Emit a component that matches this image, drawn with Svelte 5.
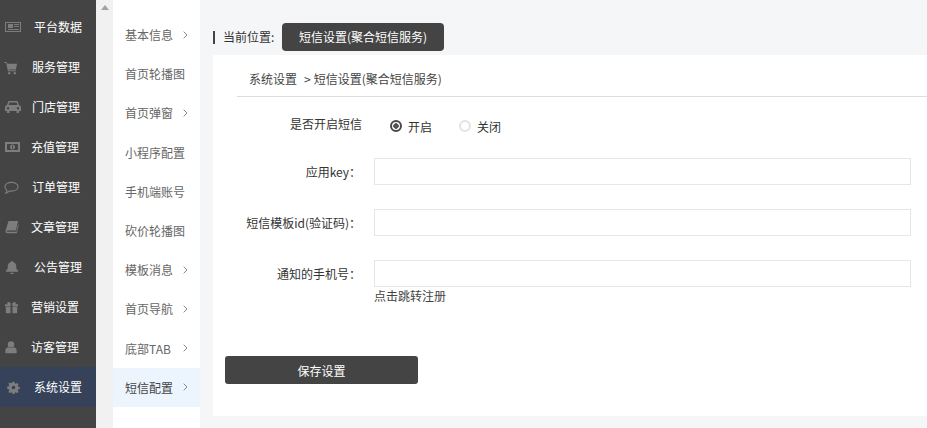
<script>
  const nav = [
    { name: "平台数据", left: 34, icon: "news", x: 5, size: 16 },
    { name: "服务管理", left: 32, icon: "cart", x: 4, size: 15 },
    { name: "门店管理", left: 32, icon: "car", x: 5, size: 16 },
    { name: "充值管理", left: 31, icon: "money", x: 5, size: 16 },
    { name: "订单管理", left: 32, icon: "comment", x: 4, size: 15 },
    { name: "文章管理", left: 31, icon: "book", x: 5, size: 14 },
    { name: "公告管理", left: 34, icon: "bell", x: 5, size: 14 },
    { name: "营销设置", left: 31, icon: "gift", x: 5, size: 13 },
    { name: "访客管理", left: 31, icon: "user", x: 4, size: 14 },
    { name: "系统设置", left: 34, icon: "cog", x: 7, size: 13, active: true },
  ];

  const sub = [
    { name: "基本信息", more: true },
    { name: "首页轮播图" },
    { name: "首页弹窗", more: true },
    { name: "小程序配置" },
    { name: "手机端账号" },
    { name: "砍价轮播图" },
    { name: "模板消息", more: true },
    { name: "首页导航", more: true },
    { name: "底部TAB", more: true },
    { name: "短信配置", more: true, active: true },
  ];
</script>

<div class="page">
  <aside class="nav">
    {#each nav as item}
      <div class="nav-item" class:active={item.active}>
        <svg class="nav-icon" viewBox="0 0 16 16" width={item.size} height={item.size} style="left: {item.x}px; top: {20 - item.size / 2}px" aria-hidden="true">
          {#if item.icon === "news"}
            <path fill-rule="evenodd" d="M0 3h16v10H0zM1 4v8h14V4zM3 5h5v4H3zM9 5h5v1H9zM9 7h5v1H9zM3 10h11v1H3z" />
          {:else if item.icon === "cart"}
            <path d="M0 2h3l.5 2H14l-1.400 6H5l.3 1H13v1H4.200L2.300 3H0z" />
            <circle cx="5.500" cy="14" r="1.300" />
            <circle cx="11.500" cy="14" r="1.300" />
          {:else if item.icon === "car"}
            <path fill-rule="evenodd" d="M3.500 2h9l1.600 4.200c1 .4 1.900 1 1.900 2V12h-2v2h-2.500v-2h-7v2H2v-2H0V8.200c0-1 .9-1.600 1.900-2zM4.500 3.500 3.500 6h9l-1-2.500zM3 8a1.200 1.200 0 1 0 0 2.400A1.200 1.200 0 0 0 3 8zm10 0a1.200 1.200 0 1 0 0 2.400A1.200 1.200 0 0 0 13 8z" />
          {:else if item.icon === "money"}
            <path fill-rule="evenodd" d="M0 3h15v10H0zM2.500 5 2 5.500v5l.5.5h10l.5-.5v-5l-.5-.5zM7.500 5.500c1.400 0 2.500 1.100 2.500 2.500s-1.100 2.500-2.500 2.500S5 9.400 5 8s1.100-2.500 2.500-2.500zM7 6.500V9.500h1V6.500z" />
          {:else if item.icon === "comment"}
            <path fill="none" stroke="currentColor" stroke-width="1.200" d="M8 2.500c3.900 0 7 2 7 4.700s-3.100 4.600-7 4.600c-.8 0-1.500-.1-2.200-.2C4.800 12.700 3.500 13.600 2 14c.6-.8 1-1.700 1.100-2.900C1.800 10.200 1 8.800 1 7.200 1 4.500 4.100 2.500 8 2.500z" />
          {:else if item.icon === "book"}
            <path d="M4 1h11l-2.500 11H2.700c-.5 0-.8.3-.8.700 0 .4.300.8.800.8h10.300l2-8.500.7.500L13.500 15H2.500C1.300 15 .4 14 .6 12.500z" />
          {:else if item.icon === "bell"}
            <path d="M8 .8c.6 0 1 .4 1 1v.6c2.400.4 3.800 2.300 3.800 4.600 0 3 .7 4 2.200 5.300V13.500H1v-1.200C2.500 11 3.200 10 3.200 7c0-2.300 1.400-4.200 3.800-4.600v-.6c0-.6.4-1 1-1zM6 14.500h4a2 2 0 0 1-4 0z" />
          {:else if item.icon === "gift"}
            <path fill-rule="evenodd" d="M1 7.500h5.800V15H2c-.6 0-1-.4-1-1zM9.200 7.500H15V14c0 .6-.4 1-1 1H9.200zM0 4h4C2.800 3.400 2.500 2.700 2.700 2c.3-.9 1.600-1.200 2.600-.5.900.6 1.900 1.500 2.700 2.500.8-1 1.800-1.900 2.700-2.500 1-.7 2.300-.4 2.600.5.200.7-.1 1.400-1.300 2h4v2.700H9.200V4H6.800v2.700H0z" />
          {:else if item.icon === "user"}
            <circle cx="8" cy="5" r="3.700" />
            <path d="M1.500 14.500v-2.300c0-2.200 1.500-3.700 3.500-3.900 1.600 1.200 4.400 1.200 6 0 2 .2 3.500 1.700 3.500 3.900v2.300c0 .3-.3.500-.6.500H2.100c-.3 0-.6-.2-.6-.5z" />
          {:else}
            <path fill-rule="evenodd" d="M6.800 1h2.400l.4 2 1.300.5 1.700-1.100 1.700 1.700-1.100 1.700.5 1.300 2 .4v2.400l-2 .4-.5 1.300 1.100 1.700-1.700 1.700-1.700-1.100-1.300.5-.4 2H6.800l-.4-2-1.300-.5-1.700 1.100-1.700-1.700 1.100-1.700-.5-1.300-2-.4V6.800l2-.4.5-1.300-1.100-1.700 1.700-1.700 1.700 1.100 1.300-.5zM8 5.800a2.200 2.200 0 1 0 0 4.400 2.200 2.200 0 0 0 0-4.400z" />
          {/if}
        </svg>
        <span class="nav-label" style="left: {item.left}px">{item.name}</span>
      </div>
    {/each}
  </aside>

  <div class="scrollbar"><span class="arrow"></span></div>

  <nav class="sub">
    {#each sub as item}
      <div class="sub-item" class:active={item.active}>
        <span>{item.name}</span>
        {#if item.more}
          <svg class="chevron" viewBox="0 0 5 8" width="5" height="8" aria-hidden="true">
            <path d="M.7 .7l3.300 3.300-3.300 3.300" fill="none" stroke="currentColor" stroke-width="1" />
          </svg>
        {/if}
      </div>
    {/each}
  </nav>

  <main class="main">
    <div class="crumbs">
      <span class="bar"></span>
      <span class="where">当前位置:</span>
      <span class="pill">短信设置(聚合短信服务)</span>
    </div>

    <section class="panel">
      <div class="title">系统设置<span class="sep">&gt;</span>短信设置(聚合短信服务)</div>

      <div class="switch-row">
        <span class="switch-label">是否开启短信</span>
        <span class="radio on"></span>
        <span class="radio-text">开启</span>
        <span class="radio"></span>
        <span class="radio-text">关闭</span>
      </div>

      <div class="field">
        <label for="appkey">应用key：</label>
        <input id="appkey" type="text" />
      </div>
      <div class="field">
        <label for="tpl">短信模板id(验证码)：</label>
        <input id="tpl" type="text" />
      </div>
      <div class="field last">
        <label for="phone">通知的手机号：</label>
        <input id="phone" type="text" />
      </div>
      <div class="hint">点击跳转注册</div>

      <button class="save" type="button">保存设置</button>
    </section>
  </main>
</div>

<style>
  :global(body) {
    margin: 0;
    background: #f5f6f8;
  }

  .page {
    display: flex;
    height: 428px;
    width: 927px;
    overflow: hidden;
    font-family: "Noto Sans CJK SC", "Noto Sans", sans-serif;
    font-size: 12px;
    color: #333;
    background: #f5f6f8;
  }

  .nav {
    flex: 0 0 96px;
    padding-top: 7px;
    box-sizing: border-box;
    background: #444;
  }
  .nav-item {
    position: relative;
    height: 40px;
    color: #7d7d7d;
  }
  .nav-item.active {
    background: #35425a;
  }
  .nav-icon {
    position: absolute;
    fill: currentColor;
  }
  .nav-label {
    position: absolute;
    top: 0;
    line-height: 40px;
    color: #fff;
  }

  .scrollbar {
    flex: 0 0 17px;
    background: #f1f1f1;
    display: flex;
    justify-content: center;
    padding-top: 5px;
    box-sizing: border-box;
  }
  .arrow {
    width: 0;
    height: 0;
    border-left: 4px solid transparent;
    border-right: 4px solid transparent;
    border-bottom: 5px solid #a3a3a3;
  }

  .sub {
    flex: 0 0 87px;
    background: #fff;
    padding-top: 15px;
    box-sizing: border-box;
  }
  .sub-item {
    display: flex;
    align-items: center;
    justify-content: space-between;
    height: 39.2px;
    padding: 0 12px;
    color: #666;
  }
  .sub-item.active {
    background: #ecf5fe;
    color: #444;
  }
  .chevron {
    color: #888;
  }

  .main {
    flex: 1;
    padding: 23px 0 12px 13px;
    min-width: 0;
  }
  .crumbs {
    display: flex;
    align-items: center;
    height: 28px;
    margin-bottom: 4px;
  }
  .bar {
    width: 2px;
    height: 13px;
    background: #444;
    margin-right: 8px;
  }
  .where {
    width: 59px;
    color: #333;
    margin-top: -1px;
  }
  .pill {
    width: 162px;
    height: 28px;
    line-height: 28px;
    text-align: center;
    background: #444;
    color: #fff;
    border-radius: 4px;
  }

  .panel {
    background: #fff;
    height: 361px;
    padding-left: 24px;
    box-sizing: border-box;
  }
  .title {
    height: 41px;
    line-height: 48px;
    padding-left: 12px;
    border-bottom: 1px solid #ddd;
    color: #444;
  }
  .sep {
    margin: 0 3px 0 7px;
  }

  .switch-row {
    display: flex;
    align-items: center;
    height: 20px;
    margin-top: 19px;
    color: #333;
  }
  .switch-label {
    margin-left: 53px;
    margin-bottom: 5px;
    width: 100px;
  }
  .radio {
    width: 12px;
    height: 12px;
    border-radius: 50%;
    border: 2px solid #e2e2e2;
    box-sizing: border-box;
  }
  .radio.on {
    border: 2px solid #4a4a4a;
    background: radial-gradient(circle, #555 0 2.5px, #fff 3px);
  }
  .radio-text {
    margin-left: 6px;
    width: 52px;
  }
  .radio-text + .radio {
    margin-left: -1px;
  }

  .field {
    display: flex;
    align-items: center;
    margin-top: 24px;
    margin-bottom: 24px;
  }
  .switch-row + .field {
    margin-top: 22px;
  }
  .field label {
    width: 125px;
    text-align: right;
    margin-left: -1px;
    margin-right: 13px;
    color: #333;
    white-space: nowrap;
  }
  .field input {
    width: 537px;
    height: 27px;
    box-sizing: border-box;
    border: 1px solid #e6e6e6;
    background: #fff;
    padding: 0 8px;
    outline: none;
  }
  .field.last {
    margin-bottom: 0;
  }
  .hint {
    margin-left: 137px;
    margin-top: 1px;
    line-height: 16px;
    color: #444;
  }
  .save {
    display: block;
    width: 193px;
    height: 28px;
    margin: 52px 0 0 -12px;
    border: 0;
    border-radius: 3px;
    background: #444;
    color: #fff;
    font: inherit;
    padding: 0;
  }
</style>
